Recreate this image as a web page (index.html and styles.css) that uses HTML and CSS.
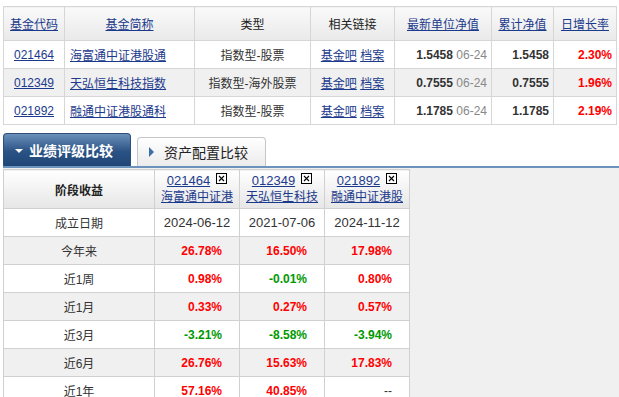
FILE: index.html
```html
<!DOCTYPE html>
<html lang="zh-CN">
<head>
<meta charset="utf-8">
<title>基金比较</title>
<link rel="stylesheet" href="styles.css">
</head>
<body>
<div class="page">
  <table class="funds">
    <colgroup>
      <col class="c1"><col class="c2"><col class="c3"><col class="c4"><col class="c5"><col class="c6"><col class="c7">
    </colgroup>
    <thead>
      <tr>
        <th><a href="#">基金代码</a></th>
        <th><a href="#">基金简称</a></th>
        <th>类型</th>
        <th>相关链接</th>
        <th><a href="#">最新单位净值</a></th>
        <th><a href="#">累计净值</a></th>
        <th><a href="#">日增长率</a></th>
      </tr>
    </thead>
    <tbody>
      <tr>
        <td class="center"><a href="#">021464</a></td>
        <td class="name"><a href="#">海富通中证港股通</a></td>
        <td class="center">指数型-股票</td>
        <td class="center"><a href="#">基金吧</a> <a href="#">档案</a></td>
        <td class="num"><b>1.5458</b> <span class="date">06-24</span></td>
        <td class="num"><b>1.5458</b></td>
        <td class="num up"><b>2.30%</b></td>
      </tr>
      <tr class="alt">
        <td class="center"><a href="#">012349</a></td>
        <td class="name"><a href="#">天弘恒生科技指数</a></td>
        <td class="center">指数型-海外股票</td>
        <td class="center"><a href="#">基金吧</a> <a href="#">档案</a></td>
        <td class="num"><b>0.7555</b> <span class="date">06-24</span></td>
        <td class="num"><b>0.7555</b></td>
        <td class="num up"><b>1.96%</b></td>
      </tr>
      <tr>
        <td class="center"><a href="#">021892</a></td>
        <td class="name"><a href="#">融通中证港股通科</a></td>
        <td class="center">指数型-股票</td>
        <td class="center"><a href="#">基金吧</a> <a href="#">档案</a></td>
        <td class="num"><b>1.1785</b> <span class="date">06-24</span></td>
        <td class="num"><b>1.1785</b></td>
        <td class="num up"><b>2.19%</b></td>
      </tr>
    </tbody>
  </table>

  <div class="tabs">
    <div class="tab active"><span class="tri-down"></span>业绩评级比较</div>
    <div class="tab"><span class="tri-right"></span>资产配置比较</div>
  </div>

  <div class="panel">
    <table class="perf">
      <colgroup>
        <col class="p1"><col class="p2"><col class="p2"><col class="p2">
      </colgroup>
      <thead>
        <tr>
          <th class="label">阶段收益</th>
          <th><div class="code"><a href="#">021464</a><svg class="x" viewBox="0 0 11 11" width="11" height="11"><rect x="0.5" y="0.5" width="10" height="10" fill="#fff" stroke="#000"/><path d="M3 3L8 8M8 3L3 8" stroke="#000" stroke-width="1.1"/></svg></div><a href="#" class="fname">海富通中证港</a></th>
          <th><div class="code"><a href="#">012349</a><svg class="x" viewBox="0 0 11 11" width="11" height="11"><rect x="0.5" y="0.5" width="10" height="10" fill="#fff" stroke="#000"/><path d="M3 3L8 8M8 3L3 8" stroke="#000" stroke-width="1.1"/></svg></div><a href="#" class="fname">天弘恒生科技</a></th>
          <th><div class="code"><a href="#">021892</a><svg class="x" viewBox="0 0 11 11" width="11" height="11"><rect x="0.5" y="0.5" width="10" height="10" fill="#fff" stroke="#000"/><path d="M3 3L8 8M8 3L3 8" stroke="#000" stroke-width="1.1"/></svg></div><a href="#" class="fname">融通中证港股</a></th>
        </tr>
      </thead>
      <tbody>
        <tr>
          <td class="label">成立日期</td>
          <td class="date13">2024-06-12</td>
          <td class="date13">2021-07-06</td>
          <td class="date13">2024-11-12</td>
        </tr>
        <tr class="alt">
          <td class="label">今年来</td>
          <td class="pct up">26.78%</td>
          <td class="pct up">16.50%</td>
          <td class="pct up">17.98%</td>
        </tr>
        <tr>
          <td class="label">近1周</td>
          <td class="pct up">0.98%</td>
          <td class="pct down">-0.01%</td>
          <td class="pct up">0.80%</td>
        </tr>
        <tr class="alt">
          <td class="label">近1月</td>
          <td class="pct up">0.33%</td>
          <td class="pct up">0.27%</td>
          <td class="pct up">0.57%</td>
        </tr>
        <tr>
          <td class="label">近3月</td>
          <td class="pct down">-3.21%</td>
          <td class="pct down">-8.58%</td>
          <td class="pct down">-3.94%</td>
        </tr>
        <tr class="alt">
          <td class="label">近6月</td>
          <td class="pct up">26.76%</td>
          <td class="pct up">15.63%</td>
          <td class="pct up">17.83%</td>
        </tr>
        <tr>
          <td class="label">近1年</td>
          <td class="pct up">57.16%</td>
          <td class="pct up">40.85%</td>
          <td class="pct plain">--</td>
        </tr>
      </tbody>
    </table>
  </div>
</div>
</body>
</html>
```

FILE: styles.css
```css
html, body {
  margin: 0;
  padding: 0;
  background: #fff;
}

body {
  font-family: "Liberation Sans", "Noto Sans CJK SC", sans-serif;
  font-size: 12px;
  color: #333;
}

a {
  color: #1b3a8c;
  text-decoration: underline;
}

.page {
  padding: 6px 0 0 3px;
}

/* top fund table */
.funds {
  border-collapse: collapse;
  table-layout: fixed;
  width: 614px;
}

.funds .c1 { width: 61px; }
.funds .c2 { width: 130px; }
.funds .c3 { width: 116px; }
.funds .c4 { width: 84px; }
.funds .c5 { width: 97px; }
.funds .c6 { width: 62px; }
.funds .c7 { width: 63px; }

.funds th,
.funds td {
  border: 1px solid #d6d6d6;
  padding: 0 4px;
  white-space: nowrap;
  overflow: hidden;
}

.funds th {
  height: 33px;
  font-weight: normal;
  color: #222;
  background: linear-gradient(#fafafa, #e9e9e9);
  text-align: center;
}

.funds td {
  height: 27px;
  background: #fff;
}

.funds tr.alt td {
  background: #f0f0f0;
}

.funds .center { text-align: center; }
.funds .name { text-align: left; padding-left: 5px; }
.funds .num { text-align: right; }
.funds .num b { color: #333; }
.funds .date { color: #888; font-size: 12px; }

.up, .funds .num.up b { color: #f00; }
.down { color: #090; }

/* tabs */
.tabs {
  display: flex;
  align-items: flex-end;
  gap: 6px;
  margin-top: 8px;
  border-bottom: 2px solid #6b93bc;
  height: 33px;
}

.tab {
  box-sizing: border-box;
  display: flex;
  align-items: center;
  font-size: 14px;
  border: 1px solid #c6c6c6;
  border-bottom: none;
  border-radius: 4px 4px 0 0;
  background: linear-gradient(#ffffff, #ebebeb);
  color: #222;
  width: 129px;
  height: 29px;
  padding-left: 10px;
}

.tab.active {
  width: 128px;
  height: 33px;
  border-color: #2d4f79;
  background: linear-gradient(#6a90ba, #2a5284 55%, #1f4676);
  color: #fff;
  font-weight: bold;
}

.tri-down {
  width: 0;
  height: 0;
  border-left: 4px solid transparent;
  border-right: 4px solid transparent;
  border-top: 4px solid #fff;
  margin: 1px 6px 0 1px;
}

.tri-right {
  width: 0;
  height: 0;
  border-top: 5px solid transparent;
  border-bottom: 5px solid transparent;
  border-left: 5px solid #3d6fa6;
  margin: 0 10px 0 1px;
}

/* performance panel */
.panel {
  background: #f0f0f0;
  padding-top: 1px;
  height: 240px;
}

.perf {
  border-collapse: collapse;
  table-layout: fixed;
  width: 407px;
}

.perf .p1 { width: 151px; }
.perf .p2 { width: 85px; }

.perf th,
.perf td {
  border: 1px solid #d0d0d0;
  padding: 0;
  white-space: nowrap;
  overflow: hidden;
}

.perf th {
  height: 38px;
  background: linear-gradient(#ffffff, #e6e6e6);
  font-weight: normal;
  text-align: center;
  vertical-align: middle;
}

.perf th.label {
  font-weight: bold;
  color: #222;
}

.perf .code {
  display: flex;
  justify-content: center;
  align-items: flex-start;
  font-size: 13px;
  line-height: 17px;
}

.perf .code .x {
  margin: 1px 0 0 6px;
}

.perf .fname {
  display: block;
  font-size: 12px;
  line-height: 17px;
}

.perf td {
  height: 27px;
  background: #fff;
}

.perf tr.alt td {
  background: #f0f0f0;
}

.perf td.label {
  text-align: center;
  color: #333;
}

.perf td.date13 {
  text-align: center;
  font-size: 13px;
  color: #333;
}

.perf td.pct {
  text-align: right;
  padding-right: 17px;
  font-weight: bold;
}

.perf td.plain {
  color: #333;
  font-weight: normal;
}
```
